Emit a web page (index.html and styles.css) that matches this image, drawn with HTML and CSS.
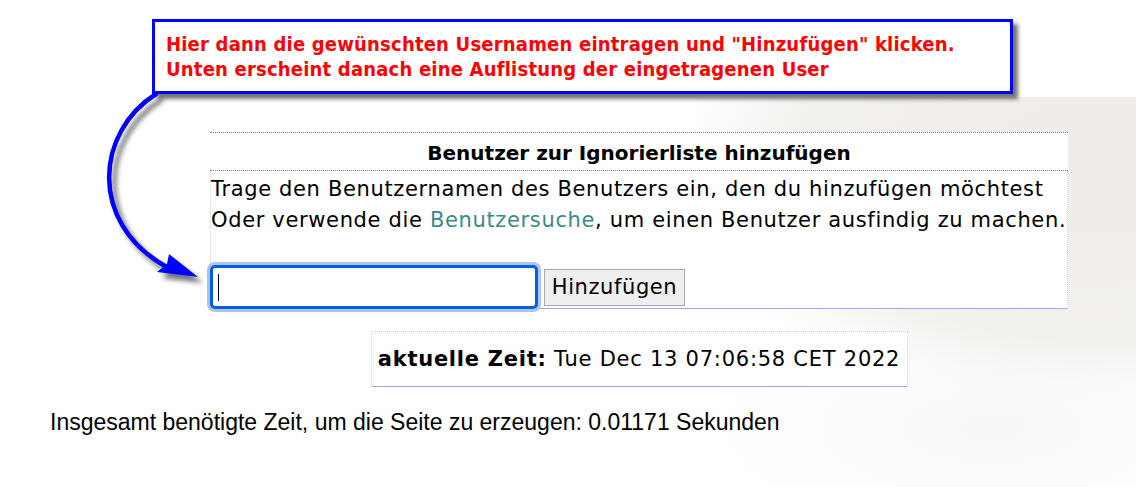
FILE: index.html
```html
<!DOCTYPE html>
<html lang="de">
<head>
<meta charset="utf-8">
<title>Ignorierliste</title>
<link rel="stylesheet" href="styles.css">
</head>
<body>
<div class="page">
  <div class="content">
    <div class="panel">
      <div class="panel-head">Benutzer zur Ignorierliste hinzufügen</div>
      <div class="panel-body">
        <p class="line">Trage den Benutzernamen des Benutzers ein, den du hinzufügen möchtest</p>
        <p class="line">Oder verwende die <a class="link" href="#">Benutzersuche</a>, um einen Benutzer ausfindig zu machen.</p>
        <div class="form-row">
          <div class="field"><span class="caret"></span></div>
          <button class="btn" type="button">Hinzufügen</button>
        </div>
      </div>
    </div>
    <div class="timebox"><b>aktuelle Zeit:</b> Tue Dec 13 07:06:58 CET 2022</div>
  </div>
  <p class="footer">Insgesamt benötigte Zeit, um die Seite zu erzeugen: 0.01171 Sekunden</p>
</div>

<div class="callout">Hier dann die gewünschten Usernamen eintragen und "Hinzufügen" klicken.<br>Unten erscheint danach eine Auflistung der eingetragenen User</div>

<svg class="arrow" width="220" height="300" viewBox="0 0 220 300" xmlns="http://www.w3.org/2000/svg">
  <defs>
    <filter id="sh" x="-30%" y="-30%" width="160%" height="160%">
      <feGaussianBlur in="SourceAlpha" stdDeviation="2.5"/>
      <feOffset dx="5" dy="6" result="b"/>
      <feComponentTransfer><feFuncA type="linear" slope="0.55"/></feComponentTransfer>
      <feMerge><feMergeNode/><feMergeNode in="SourceGraphic"/></feMerge>
    </filter>
  </defs>
  <g filter="url(#sh)">
    <path d="M156,94 C96,132 88,222 165,266" fill="none" stroke="#0000ff" stroke-width="4.5" stroke-linecap="round"/>
    <polygon points="198,277 157,272 167,264 169,254" fill="#0000ff"/>
  </g>
</svg>
</body>
</html>
```
FILE: styles.css
```css
html, body {
  margin: 0;
  padding: 0;
}
body {
  width: 1136px;
  height: 487px;
  overflow: hidden;
  background-color: #ffffff;
  background-image:
    radial-gradient(ellipse 420px 240px at 400px 70px, rgba(237,234,229,0.9) 0%, rgba(240,237,233,0.8) 72%, rgba(247,246,244,0.45) 90%, rgba(255,255,255,0) 100%),
    radial-gradient(ellipse 300px 120px at 300px 330px, rgba(244,244,244,0.7) 0%, rgba(250,250,250,0.4) 60%, rgba(255,255,255,0) 100%);
  background-repeat: no-repeat, no-repeat;
  background-position: 693px 97px, 693px 97px;
  background-size: 443px 390px, 443px 390px;
  font-family: "DejaVu Sans", Verdana, sans-serif;
  color: #000;
}
.page {
  padding-top: 132px;
}
.content {
  margin-left: 210px;
  width: 858px;
  display: flex;
  flex-direction: column;
  align-items: center;
}
.panel {
  width: 858px;
  background: #fff;
  border-top: 1px dotted #808080;
}
.panel-head {
  height: 37px;
  line-height: 40px;
  text-align: center;
  font-weight: bold;
  font-size: 20px;
  border-bottom: 1px dotted #808080;
}
.panel-body {
  border-left: 1px dotted #c8d8ec;
  border-right: 1px dotted #c8d8ec;
  border-bottom: 1px solid #a8a8e0;
  padding: 3px 0 0 0;
  height: 138px;
  box-sizing: border-box;
}
.line {
  margin: 0;
  font-size: 21px;
  letter-spacing: 0.65px;
  line-height: 31px;
  white-space: nowrap;
}
.link {
  color: #40878b;
  text-decoration: none;
}
.form-row {
  display: flex;
  align-items: center;
  gap: 6px;
  margin-top: 29px;
  margin-left: -1px;
}
.field {
  width: 328px;
  height: 44px;
  box-sizing: border-box;
  border: 3px solid #0060df;
  border-radius: 5px;
  box-shadow: 0 0 0 3px #adc4ea;
  background: #fff;
  display: flex;
  align-items: center;
  padding-left: 5px;
}
.caret {
  width: 1px;
  height: 27px;
  background: #000;
}
.btn {
  font-family: "DejaVu Sans", Verdana, sans-serif;
  font-size: 21px;
  letter-spacing: 0.6px;
  width: 141px;
  height: 37px;
  padding: 0;
  background: #efefef;
  border: 1px solid #a9a9a9;
  color: #000;
  border-radius: 0;
}
.timebox {
  margin-top: 22px;
  width: 537px;
  height: 56px;
  box-sizing: border-box;
  border-top: 1px dotted #c8d8ec;
  border-left: 1px dotted #c8d8ec;
  border-right: 1px dotted #c8d8ec;
  border-bottom: 1px solid #a8a8e0;
  background: #fff;
  font-size: 21px;
  letter-spacing: 0.75px;
  line-height: 54px;
  text-align: center;
  white-space: nowrap;
}
.footer {
  margin: 22px 0 0 50px;
  font-family: "Liberation Sans", Arial, sans-serif;
  font-size: 23px;
  line-height: 26px;
  white-space: nowrap;
}
.callout {
  position: absolute;
  left: 152px;
  top: 19px;
  width: 844px;
  height: 69px;
  border: 3px solid #0000ff;
  background: #fff;
  box-shadow: 5px 5px 4px rgba(0,0,0,0.55);
  color: #ff0000;
  font-family: "DejaVu Sans Condensed", "DejaVu Sans", sans-serif;
  font-weight: bold;
  font-size: 20px;
  letter-spacing: 0.2px;
  line-height: 25px;
  padding: 0 0 0 11px;
  display: flex;
  flex-direction: column;
  justify-content: center;
  white-space: nowrap;
}
.arrow {
  position: absolute;
  left: 0;
  top: 0;
}
```
